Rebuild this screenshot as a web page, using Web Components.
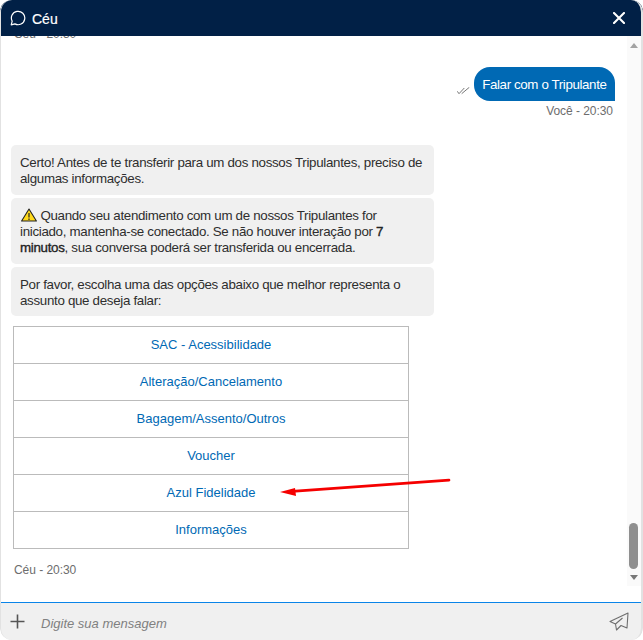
<!DOCTYPE html>
<html lang="pt"><head><meta charset="utf-8"><title>Céu</title>
<style>
html,body{margin:0;padding:0;background:#fff}
body{font-family:"Liberation Sans",Arial,sans-serif;width:643px;height:640px;overflow:hidden}
</style></head><body>
<chat-window>
  <chat-header slot="header" title-text="Céu"></chat-header>
  <chat-meta class="cut" side="left">Céu - 20:30</chat-meta>
  <user-message>Falar com o Tripulante</user-message>
  <chat-meta side="right">Você - 20:30</chat-meta>
  <bot-bubble style="margin-top:27px">Certo! Antes de te transferir para um dos nossos Tripulantes, preciso de algumas informações.</bot-bubble>
  <bot-bubble style="margin-top:3px"><warn-icon></warn-icon> Quando seu atendimento com um de nossos Tripulantes for iniciado, mantenha-se conectado. Se não houver interação por <strong-text>7</strong-text> <strong-text>minutos</strong-text>, sua conversa poderá ser transferida ou encerrada.</bot-bubble>
  <bot-bubble style="margin-top:3px">Por favor, escolha uma das opções abaixo que melhor representa o assunto que deseja falar:</bot-bubble>
  <option-list>
    <option-button>SAC - Acessibilidade</option-button>
    <option-button>Alteração/Cancelamento</option-button>
    <option-button>Bagagem/Assento/Outros</option-button>
    <option-button>Voucher</option-button>
    <option-button>Azul Fidelidade</option-button>
    <option-button>Informações</option-button>
  </option-list>
  <chat-meta side="left" style="margin-top:14px">Céu - 20:30</chat-meta>
  <chat-composer slot="footer"></chat-composer>
</chat-window>
<script>
function def(name, html){
  customElements.define(name, class extends HTMLElement{
    connectedCallback(){
      if(this.shadowRoot) return;
      const r=this.attachShadow({mode:'open'});
      r.innerHTML=typeof html==='function'?html(this):html;
    }
  });
}
def('chat-window',`<style>
:host{display:flex;flex-direction:column;width:643px;height:640px;box-sizing:border-box;position:relative;overflow:hidden;border-radius:12px;background:#fff;color:#333;font-family:"Liberation Sans",Arial,sans-serif}
.frame{position:absolute;inset:0;border-left:1px solid #e2e2e2;border-right:2px solid #e2e2e2;border-radius:12px;pointer-events:none;z-index:3}
.body{flex:1;display:flex;min-height:0;margin:0 2px 0 1px}
.msgs{flex:1;min-width:0;overflow:hidden;padding:0 12px 0 10px}
.track{width:14px;background:#fafafa;display:flex;flex-direction:column;align-items:center;padding:7px 1px 0 0;height:550px;box-sizing:border-box}
.up{width:0;height:0;border:4.500px solid transparent;border-top:0;border-bottom:5px solid #a3a3a3}
.gap{flex:1}
.thumb{width:9px;height:46px;border-radius:5px;background:#8f8f8f}
.down{width:0;height:0;border:4.500px solid transparent;border-bottom:0;border-top:5px solid #787878;margin:6px 0 6px}
</style>
<slot name="header"></slot>
<div class="body"><div class="msgs"><slot></slot></div>
<div class="track"><div class="up"></div><div class="gap"></div><div class="thumb"></div><div class="down"></div></div></div>
<slot name="footer"></slot><div class="frame"></div>
<svg style="position:absolute;left:278px;top:476px;z-index:2" width="176" height="22" viewBox="0 0 176 22"><line x1="171" y1="4.200" x2="14" y2="15.300" stroke="#f50000" stroke-width="2.700" stroke-linecap="round"/><path d="M2 16 17 12 18 20Z" fill="#f50000"/></svg>`);
def('chat-header',h=>`<style>
:host{display:flex;flex:none;align-items:center;height:36px;background:#012046;color:#fff;padding:0 18px 0 10px;font-size:14px}
svg.c{margin-right:6px;display:block}
.t{flex:1;-webkit-text-stroke:.2px #fff;margin-top:1px}
</style>
<svg class="c" width="16" height="16" viewBox="0 0 16 16" fill="none"><path d="M1.200 14.800 2.200 11.200A6.700 6.700 0 1 1 4.900 13.900Z" stroke="#fff" stroke-width="1.200" stroke-linejoin="round"/></svg>
<span class="t">${h.getAttribute('title-text')}</span>
<svg width="12" height="12" viewBox="0 0 12 12"><path d="M1 1 11 11M11 1 1 11" stroke="#fff" stroke-width="2.100" stroke-linecap="round"/></svg>`);
def('chat-meta',h=>`<style>
:host{display:block;font-size:12px;line-height:14px;color:#6d6d6d;letter-spacing:-.05px;${h.getAttribute('side')==='right'?'text-align:right;padding-right:2px;margin-top:3px;':'padding-left:3px;'}${h.classList.contains('cut')?'margin-top:-9px;':''}}
</style><slot></slot>`);
def('user-message',`<style>
:host{display:flex;justify-content:flex-end;align-items:flex-end;margin-top:26px}
svg{margin:0 4px 6px 0;display:block}
.b{background:#0069b4;color:#fff;font-size:13.33px;letter-spacing:-.38px;line-height:17px;padding:9px 8.500px 8px;border-radius:16px 16px 0 16px;height:34px;box-sizing:border-box;white-space:nowrap}
</style>
<svg width="13" height="8" viewBox="0 0 13 8" fill="none" stroke="#777" stroke-width="1"><path d="M.3 4.300 2 6.700 7.300 1M4.700 6.700 12.300 .3"/></svg>
<div class="b"><slot></slot></div>`);
def('bot-bubble',`<style>
:host{display:block;width:423px;box-sizing:border-box;background:#f0f0f0;border-radius:5px;padding:10px 9px 7px;font-size:13.33px;letter-spacing:-.31px;line-height:16.330px;color:#2e2e2e}
</style><slot></slot>`);
def('strong-text',`<style>:host{display:inline;-webkit-text-stroke:.35px #222;color:#222}</style><slot></slot>`);
def('warn-icon',`<style>:host{display:inline-block;vertical-align:-2px;margin-left:1px}svg{display:block}</style>
<svg width="16" height="14" viewBox="0 0 16 14"><path d="M8 1 15.400 13H.6Z" fill="#ffd91a" stroke="#222" stroke-width="1.100" stroke-linejoin="round"/><path d="M8 5V9.500M8 10.500V12" stroke="#222" stroke-width="1.200"/></svg>`);
def('option-list',`<style>:host{display:flex;flex-direction:column;width:396px;margin:10px 0 0 2px}</style><slot></slot>`);
def('option-button',`<style>
:host{display:flex;align-items:center;justify-content:center;height:37px;box-sizing:border-box;border:1px solid #bbb;border-bottom-width:0;background:#fff;color:#0069b4;font-size:13px;padding-bottom:2px}
:host(:last-child){height:38px;border-bottom-width:1px}
</style><slot></slot>`);
def('chat-composer',`<style>
:host{display:flex;flex:none;align-items:center;height:38px;box-sizing:border-box;border-top:1px solid #0a84e8;background:#f0f0f0;margin:0 2px 0 1px;padding:0 12px 0 9px}
.p{margin-right:16px;display:block}
.i{flex:1;font-style:italic;font-size:13px;color:#808080;margin-top:3px}
</style>
<svg class="p" width="15" height="15" viewBox="0 0 15 15"><path d="M7.500 .5V14.500M.5 7.500H14.500" stroke="#555" stroke-width="1.600"/></svg>
<span class="i">Digite sua mensagem</span>
<svg width="20" height="19" viewBox="0 0 20 19" fill="none" stroke="#6f6f6f" stroke-width="1.100" stroke-linejoin="round"><path d="M1 9.500 19 1 18 16 12 13.500 7.500 18 6.500 12ZM6.500 12 13.500 6"/></svg>`);
</script>
</body></html>
